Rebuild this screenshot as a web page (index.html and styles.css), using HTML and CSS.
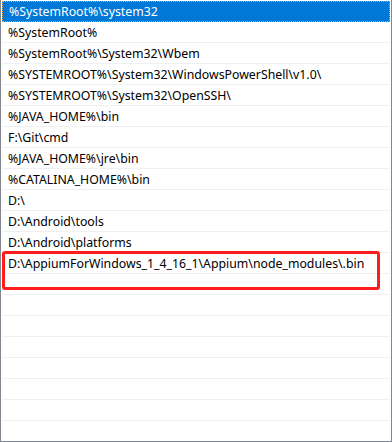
FILE: index.html
```html
<!DOCTYPE html>
<html lang="zh-CN">
<head>
  <meta charset="UTF-8">
  <title>编辑环境变量</title>
  <link rel="stylesheet" href="styles.css">
</head>
<body>
  <div class="path-list">
    <div class="row selected">%SystemRoot%\system32</div>
    <div class="row">%SystemRoot%</div>
    <div class="row">%SystemRoot%\System32\Wbem</div>
    <div class="row">%SYSTEMROOT%\System32\WindowsPowerShell\v1.0\</div>
    <div class="row">%SYSTEMROOT%\System32\OpenSSH\</div>
    <div class="row">%JAVA_HOME%\bin</div>
    <div class="row">F:\Git\cmd</div>
    <div class="row">%JAVA_HOME%\jre\bin</div>
    <div class="row">%CATALINA_HOME%\bin</div>
    <div class="row">D:\</div>
    <div class="row">D:\Android\tools</div>
    <div class="row">D:\Android\platforms</div>
    <div class="row">D:\AppiumForWindows_1_4_16_1\Appium\node_modules\.bin</div>
    <div class="row"></div>
    <div class="row"></div>
    <div class="row"></div>
    <div class="row"></div>
    <div class="row"></div>
    <div class="row"></div>
    <div class="row"></div>
    <!-- 标注框 -->
    <div class="mark"></div>
  </div>
</body>
</html>
```

FILE: styles.css
```css
body {
  margin: 0;
  background-color: #fff;
}
.path-list {
  position: relative;
  box-sizing: border-box;
  width: 392px;
  height: 442px;
  padding: 0 1px;
  border: 1px solid #828790;
  border-top: none;
  overflow: hidden;
  font-family: 'Noto Sans', 'Noto Sans CJK SC', sans-serif;
  font-size: 12.3px;
  color: #000;
}
.row {
  box-sizing: border-box;
  height: 21px;
  padding: 1px 0 0 6px;
  line-height: 20px;
  border-bottom: 1px solid #f0f0f0;
  white-space: nowrap;
}
.row.selected {
  margin-top: 1px;
  padding-top: 0;
  line-height: 19px;
  background-color: #0078d7;
  color: #fff;
  border: 1px dotted #f0a040;
}
.mark {
  position: absolute;
  left: 1px;
  top: 251px;
  width: 372px;
  height: 33px;
  border: 3px solid #ff1c1c;
  border-radius: 3px;
}
```
